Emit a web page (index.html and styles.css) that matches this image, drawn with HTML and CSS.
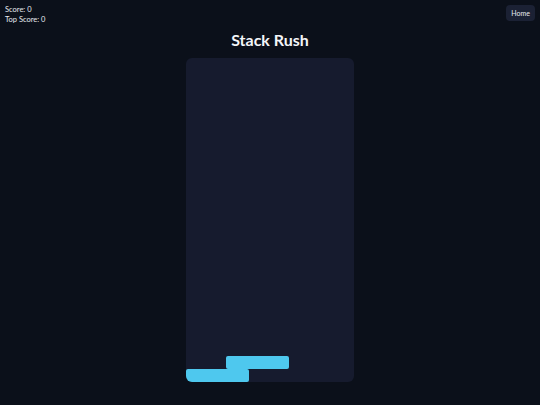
FILE: index.html
```html
<!DOCTYPE html>
<html lang="en">
<head>
  <meta charset="UTF-8" />
  <title>Stack Rush</title>
  <link rel="stylesheet" href="styles.css">
</head>
<body>
  <div class="hud">
    <div class="scores">
      <div id="score">Score: 0</div>
      <div id="topScore">Top Score: 0</div>
    </div>
    <button class="home" type="button">Home</button>
  </div>

  <h1 class="title">Stack Rush</h1>

  <div class="board" id="board">
    <div class="block" style="left: 0; bottom: 0; width: 63px;"></div>
    <div class="block" style="left: 40px; bottom: 13px; width: 63px;"></div>
  </div>
</body>
</html>
```

FILE: styles.css
```css
body {
  margin: 0;
  height: 100vh;
  background-color: #0b101a;
  color: #e8ebf0;
  font-family: Lato, 'Open Sans', sans-serif;
  display: flex;
  flex-direction: column;
  align-items: center;
}
.hud {
  align-self: stretch;
  display: flex;
  justify-content: space-between;
  align-items: flex-start;
  padding: 5px 5px 0 5px;
}
.scores {
  font-size: 7.5px;
  line-height: 9.5px;
}
.home {
  background-color: #1b2134;
  color: #e8ebf0;
  border: none;
  border-radius: 4px;
  font-family: inherit;
  font-size: 7px;
  padding: 4px 5px;
  cursor: pointer;
}
.home:hover {
  background-color: #262d45;
}
.title {
  margin: 7px 0 9px 0;
  font-size: 16px;
  line-height: 18px;
  font-weight: 700;
  color: #f4f6f9;
}
.board {
  position: relative;
  width: 168px;
  height: 324px;
  background-color: #161b2e;
  border-radius: 6px;
  overflow: hidden;
}
.block {
  position: absolute;
  height: 13px;
  background-color: #4ec8ee;
  border-radius: 2px;
}
```
